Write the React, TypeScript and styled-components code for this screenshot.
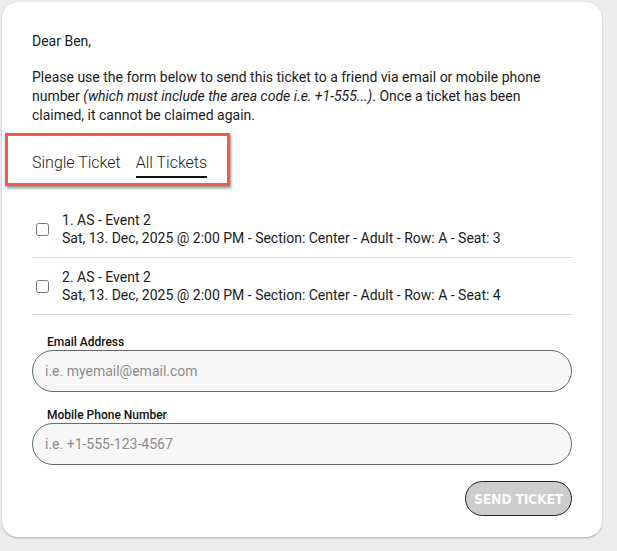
import React, { useState } from 'react';
import styled, { createGlobalStyle } from 'styled-components';

const GlobalStyle = createGlobalStyle`
  html, body {
    margin: 0;
    padding: 0;
    background: #ececec;
  }

  body {
    font-family: Roboto, "Liberation Sans", Arial, sans-serif;
    color: #1b1b1b;
  }
`;

type Ticket = {
  id: number;
  name: string;
  details: string;
};

const tickets: Ticket[] = [
  {
    id: 1,
    name: 'AS - Event 2',
    details: 'Sat, 13. Dec, 2025 @ 2:00 PM - Section: Center - Adult - Row: A - Seat: 3',
  },
  {
    id: 2,
    name: 'AS - Event 2',
    details: 'Sat, 13. Dec, 2025 @ 2:00 PM - Section: Center - Adult - Row: A - Seat: 4',
  },
];

export default function App() {
  const [tab, setTab] = useState<'single' | 'all'>('all');
  const [checked, setChecked] = useState<number[]>([]);

  const toggle = (id: number) =>
    setChecked((prev) => (prev.includes(id) ? prev.filter((x) => x !== id) : [...prev, id]));

  return (
    <Page>
      <GlobalStyle />
      <Card>
        <Greeting>Dear Ben,</Greeting>
        <Intro>
          Please use the form below to send this ticket to a friend via email or mobile phone
          number <em>(which must include the area code i.e. +1-555...)</em>. Once a ticket has been
          claimed, it cannot be claimed again.
        </Intro>

        <TabStrip>
          <Tab type="button" $active={tab === 'single'} onClick={() => setTab('single')}>
            Single Ticket
          </Tab>
          <Tab type="button" $active={tab === 'all'} onClick={() => setTab('all')}>
            All Tickets
          </Tab>
        </TabStrip>

        <TicketList>
          {tickets.map((t) => (
            <TicketRow key={t.id}>
              <Check
                type="checkbox"
                checked={checked.includes(t.id)}
                onChange={() => toggle(t.id)}
              />
              <TicketText>
                <div>
                  {t.id}. {t.name}
                </div>
                <div>{t.details}</div>
              </TicketText>
            </TicketRow>
          ))}
        </TicketList>

        <Field>
          <Label htmlFor="email">Email Address</Label>
          <Input id="email" type="email" placeholder="i.e. myemail@email.com" />
        </Field>
        <Field>
          <Label htmlFor="phone">Mobile Phone Number</Label>
          <Input id="phone" type="tel" placeholder="i.e. +1-555-123-4567" />
        </Field>

        <Actions>
          <SendButton type="button" disabled>
            SEND TICKET
          </SendButton>
        </Actions>
      </Card>
    </Page>
  );
}

const Page = styled.div`
  padding: 2px 15px 13px 2px;
`;

const Card = styled.div`
  width: 600px;
  box-sizing: border-box;
  padding: 30px 30px 21px;
  background: #fff;
  border-radius: 16px;
  box-shadow: 0 1px 2px rgba(0, 0, 0, 0.28);
  display: flex;
  flex-direction: column;
`;

const Greeting = styled.p`
  margin: 0 0 17px;
  font-size: 14px;
  line-height: 19px;
`;

const Intro = styled.p`
  margin: 0 0 8px;
  font-size: 14px;
  line-height: 19px;

  em {
    font-style: italic;
  }
`;

const TabStrip = styled.div`
  align-self: flex-start;
  display: flex;
  gap: 15px;
  margin-left: -27px;
  padding: 17px 20px 5px 24px;
  border: 3px solid #f25a4c;
  box-shadow: 1px 2px 3px rgba(0, 0, 0, 0.45);
`;

const Tab = styled.button<{ $active: boolean }>`
  padding: 0 0 4px;
  border: none;
  border-bottom: 2px solid ${(p) => (p.$active ? '#111' : 'transparent')};
  background: none;
  font-family: Roboto, "Liberation Sans", Arial, sans-serif;
  font-weight: 300;
  font-size: 16px;
  line-height: 19px;
  color: #1b1b1b;
  cursor: pointer;
`;

const TicketList = styled.div`
  margin-top: 15px;
  display: flex;
  flex-direction: column;
`;

const TicketRow = styled.label`
  display: flex;
  align-items: center;
  gap: 13px;
  padding: 10px 0 10px 4px;
  border-bottom: 1px solid #dadada;
  cursor: pointer;
`;

const Check = styled.input`
  margin: 0;
  width: 13px;
  height: 13px;
  flex: none;
`;

const TicketText = styled.div`
  font-size: 14px;
  line-height: 18px;
`;

const Field = styled.div`
  margin-top: 20px;
  display: flex;
  flex-direction: column;

  & + & {
    margin-top: 16px;
  }
`;

const Label = styled.label`
  margin: 0 0 1px 15px;
  font-size: 12px;
  font-weight: 500;
  line-height: 14px;
  color: #111;
`;

const Input = styled.input`
  box-sizing: border-box;
  height: 42px;
  padding: 0 12px;
  border: 1px solid #6a6a6a;
  border-radius: 21px;
  background: #f7f7f7;
  font-family: Roboto, "Liberation Sans", Arial, sans-serif;
  font-size: 14px;
  color: #222;
  outline: none;

  &::placeholder {
    color: #8c8c8c;
  }
`;

const Actions = styled.div`
  margin-top: 16px;
  display: flex;
  justify-content: flex-end;
`;

const SendButton = styled.button`
  box-sizing: border-box;
  width: 107px;
  height: 35px;
  padding: 0;
  border: 1px solid #222;
  border-radius: 18px;
  background: #cccccc;
  color: #fafafa;
  font-family: "DejaVu Sans Condensed", "DejaVu Sans", sans-serif;
  font-weight: bold;
  font-size: 14px;
  letter-spacing: -0.3px;
`;
